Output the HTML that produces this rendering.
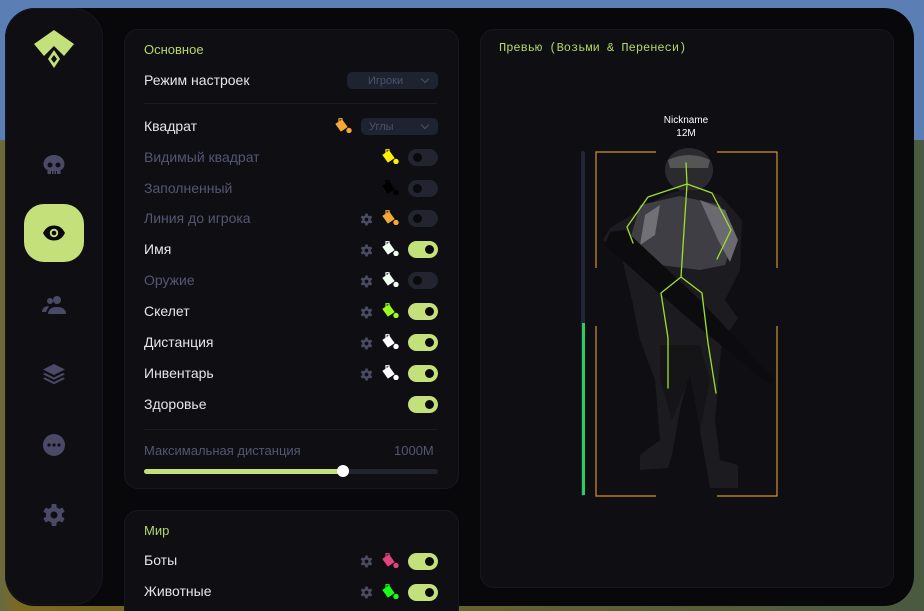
<!DOCTYPE html>
<html style="height:611px;overflow:hidden"><head><meta charset="utf-8"><style>
*{margin:0;padding:0;box-sizing:border-box}
body{width:924px;height:611px;overflow:hidden;position:relative;font-family:"Liberation Sans","DejaVu Sans",sans-serif;background:linear-gradient(90deg,#6a6a40 0,#7a6a20 2%,#4a5a40 100%)}
.sky{position:absolute;left:0;top:0;width:924px;height:140px;background:#5b7fb5}
.win{position:absolute;left:5px;top:8px;width:909px;height:598px;background:#08080b;border-radius:30px}
.side{position:absolute;left:5px;top:8px;width:98px;height:597px;background:#0e0e13;border-radius:30px;border:1px solid #16161d}
.ic{position:absolute;left:42px;width:24px;height:24px}
.active{position:absolute;left:24px;top:204px;width:60px;height:58px;background:#c3e07a;border-radius:20px}
.card{position:absolute;background:#0e0e13;border:1px solid #17171e;border-radius:14px}
.t{position:absolute;font-size:14px;color:#e6e6ea}
.dim{color:#555770}
.h{color:#b5d86a}
.tg{position:absolute;left:408px;width:30px;height:17px;border-radius:9px;background:#22242f}
.tg::after{content:"";position:absolute;top:4px;left:5px;width:9px;height:9px;border-radius:50%;background:#0a0a0d}
.tg.on{background:#c3e07a}
.tg.on::after{left:17px}
.dd{position:absolute;left:347px;width:91px;height:17px;border-radius:5px;background:#1f2230;color:#4f5268;font-size:11px;padding:2px 0 0 21px;line-height:14px}
.dd::after{content:"";position:absolute;right:10px;top:4px;width:5px;height:5px;border-right:1.5px solid #4f5268;border-bottom:1.5px solid #4f5268;transform:rotate(45deg)}
.gear{position:absolute;left:360px;width:13px;height:13px}
.b{position:absolute;left:382px;width:17px;height:15px}
.div{position:absolute;left:144px;width:293px;height:1px;background:#1b1b23}
</style></head><body>
<div class="sky"></div>
<div class="win"></div>
<div class="side"></div>
<svg style="position:absolute;left:33px;top:30px" width="42" height="40" viewBox="0 0 40 40"><path d="M20 0 L40 14 L30 26 L20 16 L10 26 L0 14Z" fill="#c3e07a"/><path d="M20 20 L26 29 L20 38 L14 29Z" fill="#c3e07a"/><path d="M20 25 L23 29 L20 33 L17 29Z" fill="#0e0e13"/></svg>
<svg class="ic" style="top:153px" viewBox="0 0 24 24"><path d="M12 2C6 2 1.5 6 1.5 11c0 3 1.5 5 4 6v4h13v-4c2.5-1 4-3 4-6 0-5-4.5-9-10.5-9z" fill="#4a4a66"/><circle cx="8" cy="12" r="2.5" fill="#0e0e13"/><circle cx="16" cy="12" r="2.5" fill="#0e0e13"/><path d="M9.5 18v3M12 18v3M14.5 18v3" stroke="#0e0e13" stroke-width="1"/></svg>
<div class="active"></div>
<svg class="ic" style="top:221px" viewBox="0 0 24 24"><path d="M1 12C4 6 8 4.5 12 4.5S20 6 23 12c-3 6-7 7.5-11 7.5S4 18 1 12z" fill="#0a0a0d"/><circle cx="12" cy="12" r="4.2" fill="#c3e07a"/><circle cx="12" cy="12" r="2.3" fill="#0a0a0d"/></svg>
<svg class="ic" style="top:293px" viewBox="0 0 24 24"><circle cx="15" cy="7" r="4" fill="#4a4a66"/><circle cx="8" cy="8" r="3" fill="#4a4a66"/><path d="M6 21c0-5 4-7 9-7s9 2 9 7z" fill="#4a4a66"/><path d="M0 19c0-4 3-6 7-6l-3 6z" fill="#4a4a66"/></svg>
<svg class="ic" style="top:362px" viewBox="0 0 24 24"><path d="M12 2l11 5.5-11 5.5L1 7.5z" fill="#4a4a66"/><path d="M3 11l9 4.5 9-4.5 2 1.2-11 5.5-11-5.5z" fill="#4a4a66"/><path d="M3 15.5l9 4.5 9-4.5 2 1.2-11 5.5-11-5.5z" fill="#4a4a66"/></svg>
<svg class="ic" style="top:433px" viewBox="0 0 24 24"><circle cx="12" cy="12" r="11" fill="#4a4a66"/><circle cx="7" cy="12" r="1.6" fill="#0e0e13"/><circle cx="12" cy="12" r="1.6" fill="#0e0e13"/><circle cx="17" cy="12" r="1.6" fill="#0e0e13"/></svg>
<svg class="ic" style="top:503px" viewBox="0 0 24 24"><g fill="#4a4a66"><circle cx="12" cy="12" r="8"/><rect x="9.5" y="1" width="5" height="22" rx="1"/><rect x="9.5" y="1" width="5" height="22" rx="1" transform="rotate(60 12 12)"/><rect x="9.5" y="1" width="5" height="22" rx="1" transform="rotate(120 12 12)"/></g><circle cx="12" cy="12" r="3.5" fill="#0e0e13"/></svg>

<div class="card" style="left:124px;top:29px;width:335px;height:460px"></div>
<div class="card" style="left:124px;top:510px;width:335px;height:120px"></div>
<div class="card" style="left:480px;top:29px;width:414px;height:559px"></div>

<div class="t h" style="left:144px;top:42px;font-size:13px">Основное</div>
<div class="t" style="left:144px;top:72px">Режим настроек</div>
<div class="dd" style="top:72px">Игроки</div>
<div class="div" style="top:103px"></div>
<div class="t" style="left:144px;top:118px">Квадрат</div>
<div class="dd" style="top:118px;left:361px;width:77px;padding-left:8px">Углы</div>
<div class="t dim" style="left:144px;top:149px">Видимый квадрат</div>
<div class="t dim" style="left:144px;top:180px">Заполненный</div>
<div class="t dim" style="left:144px;top:210px">Линия до игрока</div>
<div class="t" style="left:144px;top:241px">Имя</div>
<div class="t dim" style="left:144px;top:272px">Оружие</div>
<div class="t" style="left:144px;top:303px">Скелет</div>
<div class="t" style="left:144px;top:334px">Дистанция</div>
<div class="t" style="left:144px;top:365px">Инвентарь</div>
<div class="t" style="left:144px;top:396px">Здоровье</div>
<div class="div" style="top:429px"></div>
<div class="t dim" style="left:144px;top:443px;font-size:13px">Максимальная дистанция</div>
<div class="t dim" style="left:394px;top:443px;font-size:13px">1000M</div>
<div style="position:absolute;left:144px;top:469px;width:294px;height:5px;border-radius:3px;background:#22242f"></div>
<div style="position:absolute;left:144px;top:469px;width:200px;height:5px;border-radius:3px;background:#c3e07a"></div>
<div style="position:absolute;left:337px;top:465px;width:12px;height:12px;border-radius:50%;background:#fff"></div>
<div class="t h" style="left:144px;top:523px;font-size:13px">Мир</div>
<div class="t" style="left:144px;top:552px">Боты</div>
<div class="t" style="left:144px;top:583px">Животные</div>

<div class="tg" style="top:149px"></div>
<div class="tg" style="top:180px"></div>
<div class="tg" style="top:210px"></div>
<div class="tg on" style="top:241px"></div>
<div class="tg" style="top:272px"></div>
<div class="tg on" style="top:303px"></div>
<div class="tg on" style="top:334px"></div>
<div class="tg on" style="top:365px"></div>
<div class="tg on" style="top:396px"></div>
<div class="tg on" style="top:553px"></div>
<div class="tg on" style="top:584px"></div>

<svg width="0" height="0" style="position:absolute"><defs>
<symbol id="g" viewBox="0 0 24 24"><g fill="#4a4c60"><circle cx="12" cy="12" r="8"/><rect x="9.5" y="1" width="5" height="22" rx="1"/><rect x="9.5" y="1" width="5" height="22" rx="1" transform="rotate(60 12 12)"/><rect x="9.5" y="1" width="5" height="22" rx="1" transform="rotate(120 12 12)"/></g><circle cx="12" cy="12" r="3.5" fill="#0e0e13"/></symbol>
<symbol id="bk" viewBox="0 0 17 15"><path d="M1 6 L7 2 L12 9 L6 13 Z"/><path d="M4 4 L4 0.7 L7 0.7 L7 3" fill="none" stroke-width="1.2"/><circle cx="14" cy="12.5" r="2.2"/></symbol>
</defs></svg>
<svg class="gear" style="top:213px"><use href="#g"/></svg>
<svg class="gear" style="top:244px"><use href="#g"/></svg>
<svg class="gear" style="top:275px"><use href="#g"/></svg>
<svg class="gear" style="top:306px"><use href="#g"/></svg>
<svg class="gear" style="top:337px"><use href="#g"/></svg>
<svg class="gear" style="top:368px"><use href="#g"/></svg>
<svg class="gear" style="top:555px"><use href="#g"/></svg>
<svg class="gear" style="top:586px"><use href="#g"/></svg>
<svg class="b" style="left:335px;top:118px;fill:#f5a838;stroke:#f5a838"><use href="#bk"/></svg>
<svg class="b" style="top:149px;fill:#ffef00;stroke:#ffef00"><use href="#bk"/></svg>
<svg class="b" style="top:180px;fill:#000;stroke:#000"><use href="#bk"/></svg>
<svg class="b" style="top:210px;fill:#f5a838;stroke:#f5a838"><use href="#bk"/></svg>
<svg class="b" style="top:241px;fill:#f2fff0;stroke:#f2fff0"><use href="#bk"/></svg>
<svg class="b" style="top:272px;fill:#f2fff0;stroke:#f2fff0"><use href="#bk"/></svg>
<svg class="b" style="top:303px;fill:#9dff20;stroke:#9dff20"><use href="#bk"/></svg>
<svg class="b" style="top:334px;fill:#fff;stroke:#fff"><use href="#bk"/></svg>
<svg class="b" style="top:365px;fill:#fff;stroke:#fff"><use href="#bk"/></svg>
<svg class="b" style="top:553px;fill:#e0457a;stroke:#e0457a"><use href="#bk"/></svg>
<svg class="b" style="top:584px;fill:#18ff18;stroke:#18ff18"><use href="#bk"/></svg>

<div style="position:absolute;left:499px;top:41px;font-family:'Liberation Mono',monospace;font-size:12px;color:#b5d86a">Превью (Возьми &amp; Перенеси)</div>
<div style="position:absolute;left:636px;top:114px;width:100px;text-align:center;font-size:10px;color:#fff;line-height:13px">Nickname<br>12M</div>
<svg style="position:absolute;left:575px;top:145px" width="220" height="360" viewBox="575 145 220 360">
<rect x="581" y="151" width="4" height="345" rx="2" fill="#22243a"/>
<rect x="582" y="323" width="3" height="172" fill="#2ecc5a"/>
<g stroke="#d1922e" stroke-width="1.2" fill="none">
<path d="M596 268V152H656M717 152H777V268M596 326V496H656M717 496H777V326"/>
</g>
<ellipse cx="689" cy="170" rx="24" ry="22" fill="#2a2a2f"/>
<path d="M668 160 Q689 150 710 160 L708 168 L670 168Z" fill="#555"/>
<path d="M665 195 Q690 185 720 195 L742 220 L740 270 L725 300 L738 318 L730 330 L722 340 L715 420 L720 460 L738 465 L738 488 L710 488 L700 430 L690 370 L680 410 L672 455 L668 468 L640 470 L640 455 L660 440 L655 380 L640 340 L632 300 L620 250 L603 240 L610 228 L640 210Z" fill="#1c1c20"/>
<path d="M640 205 L680 196 L720 205 L735 235 L725 265 L700 270 L660 265 L630 240Z" fill="#3e3e44"/>
<path d="M700 200 L725 210 L738 240 L730 262 L718 240Z" fill="#6a6a70"/>
<path d="M645 215 L660 205 L655 235 L640 245Z" fill="#707076"/>
<path d="M610 232 L625 230 L700 300 L775 380 L770 385 L690 320 L605 245Z" fill="#0c0c0e"/>
<path d="M660 345 L700 345 L710 380 L700 430 L690 375 L672 420 L660 380Z" fill="#151518"/>
<g stroke="#9ee02a" stroke-width="1.3" fill="none" stroke-linecap="round" stroke-linejoin="round">
<path d="M686 163 L687 184 L681 277"/>
<path d="M633 243 L627 227 L648 197 L687 184 L712 193 L731 230 L717 259"/>
<path d="M668 388 L668 338 L661 293 L681 277 L702 293 L708 343 L716 393"/>
</g>
</svg>
</body></html>
